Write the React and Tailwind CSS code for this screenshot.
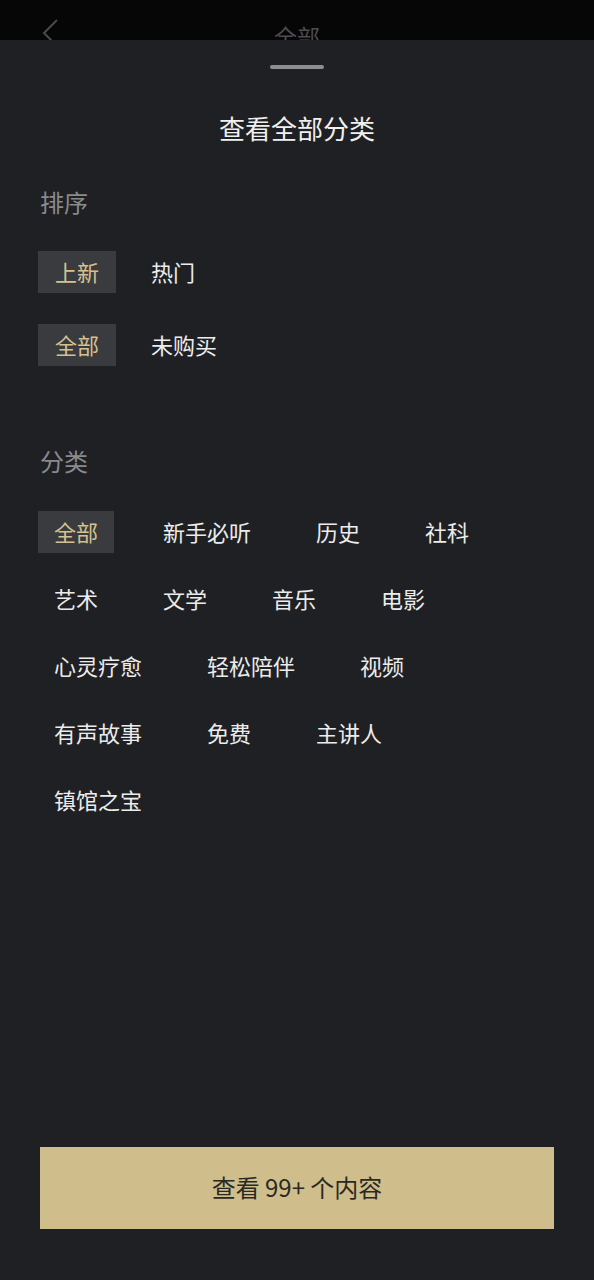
import React from "react";

const FONT = { fontFamily: '"Noto Sans CJK SC", "Noto Sans", sans-serif' };

const sortRows = [
  ["上新", "热门"],
  ["全部", "未购买"],
];

const cats = [
  "全部", "新手必听", "历史", "社科",
  "艺术", "文学", "音乐", "电影",
  "心灵疗愈", "轻松陪伴", "视频",
  "有声故事", "免费", "主讲人",
  "镇馆之宝",
];

export default function App() {
  return (
    <div className="w-[594px] h-[1280px] flex flex-col bg-[#1f2023] overflow-hidden" style={FONT}>
      {/* dimmed top bar */}
      <div className="h-[40px] shrink-0 bg-[#060607] relative overflow-hidden">
        <svg className="absolute left-[40px] top-[18px]" width="20" height="30" viewBox="0 0 20 30" fill="none">
          <path d="M17 2 L4 15 L17 28" stroke="#4a4a4c" strokeWidth="2" />
        </svg>
        <div className="absolute left-0 right-0 top-[20px] text-center text-[23px] leading-[32px] text-[#4d4d4f]">全部</div>
      </div>

      {/* sheet */}
      <div className="flex-1 flex flex-col bg-[#1f2023]">
        <div className="flex justify-center pt-[25px]">
          <div className="w-[54px] h-[4px] rounded-full bg-[#8d8e91]" />
        </div>
        <div className="mt-[41px] text-center text-[26px] leading-[36px] text-[#f0f0f0]">查看全部分类</div>

        <div className="mt-[40px] pl-[40px] text-[24px] leading-[32px] text-[#8a8a8c]">排序</div>
        <div className="mt-[33px] pl-[38px] flex flex-col gap-[31px]">
          {sortRows.map((row, i) => (
            <div key={i} className="flex items-center">
              <div className="h-[42px] w-[78px] pb-[2px] flex items-center justify-center bg-[#3a3b3e] text-[22px] text-[#d5c18f]">
                {row[0]}
              </div>
              <div className="ml-[35px] pb-[2px] text-[22px] text-[#ececec]">{row[1]}</div>
            </div>
          ))}
        </div>

        <div className="mt-[79px] pl-[40px] text-[24px] leading-[32px] text-[#8a8a8c]">分类</div>
        <div className="mt-[34px] ml-[38px] w-[510px] flex flex-wrap gap-x-[33px] gap-y-[25px]">
          {cats.map((c, i) => (
            <div
              key={i}
              className={
                "h-[42px] px-[16px] pb-[2px] flex items-center text-[22px] " +
                (i === 0 ? "bg-[#3a3b3e] text-[#d5c18f]" : "text-[#ececec]")
              }
            >
              {c}
            </div>
          ))}
        </div>

        <div className="mt-auto mb-[51px] mx-[40px] h-[82px] pb-[2px] flex items-center justify-center bg-[#cfbe8c] text-[24px] text-[#2a2923]">
          查看 99+ 个内容
        </div>
      </div>
    </div>
  );
}
